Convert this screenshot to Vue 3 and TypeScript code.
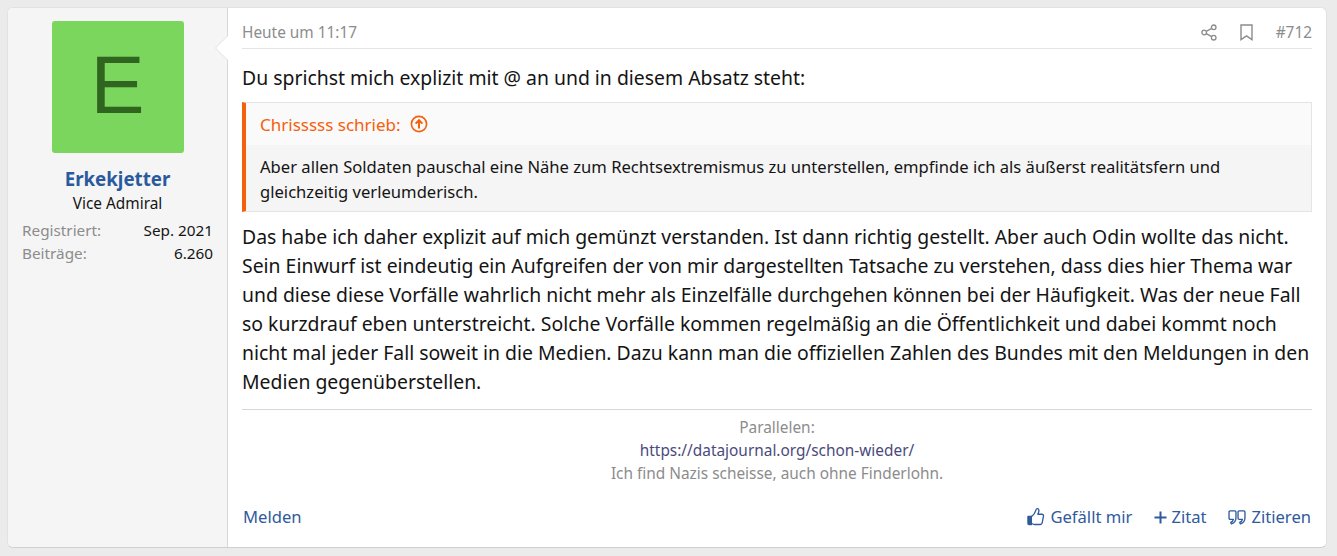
<script setup lang="ts">
const bodyBefore = 'Du sprichst mich explizit mit @ an und in diesem Absatz steht:'
const quoteText = 'Aber allen Soldaten pauschal eine Nähe zum Rechtsextremismus zu unterstellen, empfinde ich als äußerst realitätsfern und gleichzeitig verleumderisch.'
const bodyAfter = 'Das habe ich daher explizit auf mich gemünzt verstanden. Ist dann richtig gestellt. Aber auch Odin wollte das nicht. Sein Einwurf ist eindeutig ein Aufgreifen der von mir dargestellten Tatsache zu verstehen, dass dies hier Thema war und diese diese Vorfälle wahrlich nicht mehr als Einzelfälle durchgehen können bei der Häufigkeit. Was der neue Fall so kurzdrauf eben unterstreicht. Solche Vorfälle kommen regelmäßig an die Öffentlichkeit und dabei kommt noch nicht mal jeder Fall soweit in die Medien. Dazu kann man die offiziellen Zahlen des Bundes mit den Meldungen in den Medien gegenüberstellen.'
</script>

<template>
  <div class="page">
    <article class="post">
      <aside class="user">
        <div class="avatar">E</div>
        <a class="name">Erkekjetter</a>
        <div class="rank">Vice Admiral</div>
        <dl class="stats">
          <div class="stat"><dt>Registriert:</dt><dd>Sep. 2021</dd></div>
          <div class="stat"><dt>Beiträge:</dt><dd>6.260</dd></div>
        </dl>
      </aside>

      <div class="main">
        <header class="head">
          <span>Heute um 11:17</span>
          <div class="head-right">
            <svg class="ico" width="16" height="17" viewBox="0 0 16 17" fill="none" stroke="#8c8c8c" stroke-width="1.3">
              <circle cx="12.700" cy="3.300" r="2.300" />
              <circle cx="3.200" cy="8.500" r="2.300" />
              <circle cx="12.700" cy="13.700" r="2.300" />
              <path d="M5.200 7.400l5.500-3M5.200 9.600l5.500 3" />
            </svg>
            <svg class="ico" width="13" height="17" viewBox="0 0 13 17" fill="none" stroke="#8c8c8c" stroke-width="1.4">
              <path d="M1 1h11v14.600l-5.500-3.800L1 15.600z" />
            </svg>
            <span>#712</span>
          </div>
        </header>

        <p class="text first">{{ bodyBefore }}</p>

        <blockquote class="quote">
          <div class="quote-title">
            Chrisssss schrieb:
            <svg width="18" height="18" viewBox="0 0 18 18" fill="none" stroke="#f4600c" stroke-width="1.6">
              <circle cx="9" cy="9" r="7.600" />
              <path d="M9 13.400V5.400M5.600 8.600L9 5.200l3.400 3.400" stroke-width="2" />
            </svg>
          </div>
          <div class="quote-body">{{ quoteText }}</div>
        </blockquote>

        <p class="text">{{ bodyAfter }}</p>

        <div class="sig">
          <div>Parallelen:</div>
          <a class="sig-link">https://datajournal.org/schon-wieder/</a>
          <div>Ich find Nazis scheisse, auch ohne Finderlohn.</div>
        </div>

        <footer class="foot">
          <a>Melden</a>
          <div class="actions">
            <a class="action">
              <svg width="18" height="20" viewBox="0 0 19 20" fill="none" stroke="#2f5a9c" stroke-width="1.4" stroke-linejoin="round">
                <path d="M1 9.500h3.600v8.600H2.200A1.200 1.200 0 0 1 1 16.900z" fill="#2f5a9c" />
                <path d="M4.600 9.600c2.200-1.600 4-4 4.600-6.400.3-1.200.7-2 1.700-2 1.300 0 1.900 1.300 1.600 2.900-.2 1-.6 2-1.100 3h4.400c1.200 0 1.900 1 1.600 2.100l-1.400 7.100c-.2 1-.9 1.600-1.900 1.600H8c-1.300 0-2.300-.7-3.400-1.300" />
              </svg>
              Gefällt mir
            </a>
            <a class="action plus">
              <svg width="13" height="13" viewBox="0 0 13 13" fill="none" stroke="#2f5a9c" stroke-width="2">
                <path d="M6.500 0.500v12M0.500 6.500h12" />
              </svg>
              Zitat
            </a>
            <a class="action">
              <svg width="18" height="17" viewBox="0 0 19 17" fill="none" stroke="#2f5a9c" stroke-width="1.400" stroke-linejoin="round">
                <path d="M2.300 1.500h4.900c.7 0 1.200.5 1.200 1.200v6c0 3-1.900 5.500-4.800 6.500l-.7-1.500c1.500-.7 2.500-1.700 2.800-3.300H2.300c-.7 0-1.200-.5-1.200-1.200V2.700c0-.7.500-1.200 1.200-1.200z" />
                <path d="M11.800 1.500h4.900c.7 0 1.200.5 1.200 1.200v6c0 3-1.900 5.500-4.800 6.500l-.7-1.500c1.500-.7 2.500-1.700 2.800-3.300h-3.400c-.7 0-1.200-.5-1.200-1.200V2.700c0-.7.500-1.200 1.200-1.200z" />
              </svg>
              Zitieren
            </a>
          </div>
        </footer>
      </div>
    </article>
  </div>
</template>

<style>
html,
body {
  margin: 0;
  background: #ebebeb;
}
</style>

<style scoped>
.page {
  padding: 7px 10px 9px 7px;
  font-family: "Noto Sans", "Open Sans", sans-serif;
  color: #141414;
}

.post {
  display: flex;
  height: 541px;
  box-sizing: border-box;
  background: #fff;
  border-radius: 6px;
  border: 1px solid #e2e2e2;
  border-bottom-color: #cfcfcf;
  overflow: hidden;
}

.user {
  position: relative;
  flex: 0 0 220px;
  box-sizing: border-box;
  padding: 13px 14px 0;
  background: #f5f5f5;
  border-right: 1px solid #d8d8d8;
  display: flex;
  flex-direction: column;
  align-items: center;
}

/* little arrow pointing into the post */
.user::after {
  content: "";
  position: absolute;
  top: 28px;
  right: -1px;
  width: 0;
  height: 0;
  border: 12px solid transparent;
  border-left: 0;
  border-right-color: #fff;
  filter: drop-shadow(-1px 0 0 #e2e2e2);
}

.avatar {
  width: 132px;
  height: 132px;
  border-radius: 3px;
  background: #7bd65e;
  color: #2f651e;
  font-family: "Liberation Sans", sans-serif;
  font-size: 81px;
  line-height: 128px;
  text-align: center;
}

.name {
  margin-top: 12px;
  color: #2a5a9e;
  font-size: 18.7px;
  font-weight: 700;
  line-height: 27px;
}

.rank {
  font-size: 15.4px;
  line-height: 23px;
}

.stats {
  align-self: stretch;
  margin: 4px 0 0;
  font-size: 15.3px;
  line-height: 23px;
}

.stat {
  display: flex;
  justify-content: space-between;
}

.stat dt {
  color: #8c8c8c;
}

.stat dd {
  margin: 0;
}

.main {
  flex: 1;
  min-width: 0;
  padding: 0 14px;
  display: flex;
  flex-direction: column;
}

.head {
  display: flex;
  justify-content: space-between;
  align-items: center;
  height: 41px;
  padding-top: 9px;
  box-sizing: border-box;
  border-bottom: 1px solid #e4e4e4;
  color: #8c8c8c;
  font-size: 15.4px;
}

.head-right {
  display: flex;
  align-items: center;
  gap: 23px;
}

.text {
  margin: 0;
  font-size: 19.4px;
  line-height: 29px;
}

.text.first {
  margin: 14px 0 10px;
}

.quote {
  margin: 0 0 10px;
  border: 1px solid #e4e4e4;
  border-left: 4px solid #f4600c;
  background: #f5f5f5;
}

.quote-title {
  display: flex;
  align-items: center;
  gap: 9px;
  height: 42px;
  padding: 0 14px;
  background: #fafafa;
  color: #f4600c;
  font-size: 17px;
}

.quote-body {
  padding: 9px 14px 7px;
  font-size: 16.6px;
  line-height: 25px;
}

.sig {
  margin-top: 13px;
  padding-top: 6px;
  border-top: 1px solid #d8d8d8;
  text-align: center;
  color: #8c8c8c;
  font-size: 15.4px;
  line-height: 23px;
}

.sig-link {
  display: block;
  color: #4a4a7c;
}

.foot {
  display: flex;
  justify-content: space-between;
  align-items: center;
  margin-top: 20px;
  padding: 0 1px;
  color: #2f5a9c;
  font-size: 16.6px;
  line-height: 24px;
}

.actions {
  display: flex;
  gap: 22px;
}

.action {
  display: flex;
  align-items: center;
  gap: 5px;
}

.plus {
  gap: 4px;
}
</style>
